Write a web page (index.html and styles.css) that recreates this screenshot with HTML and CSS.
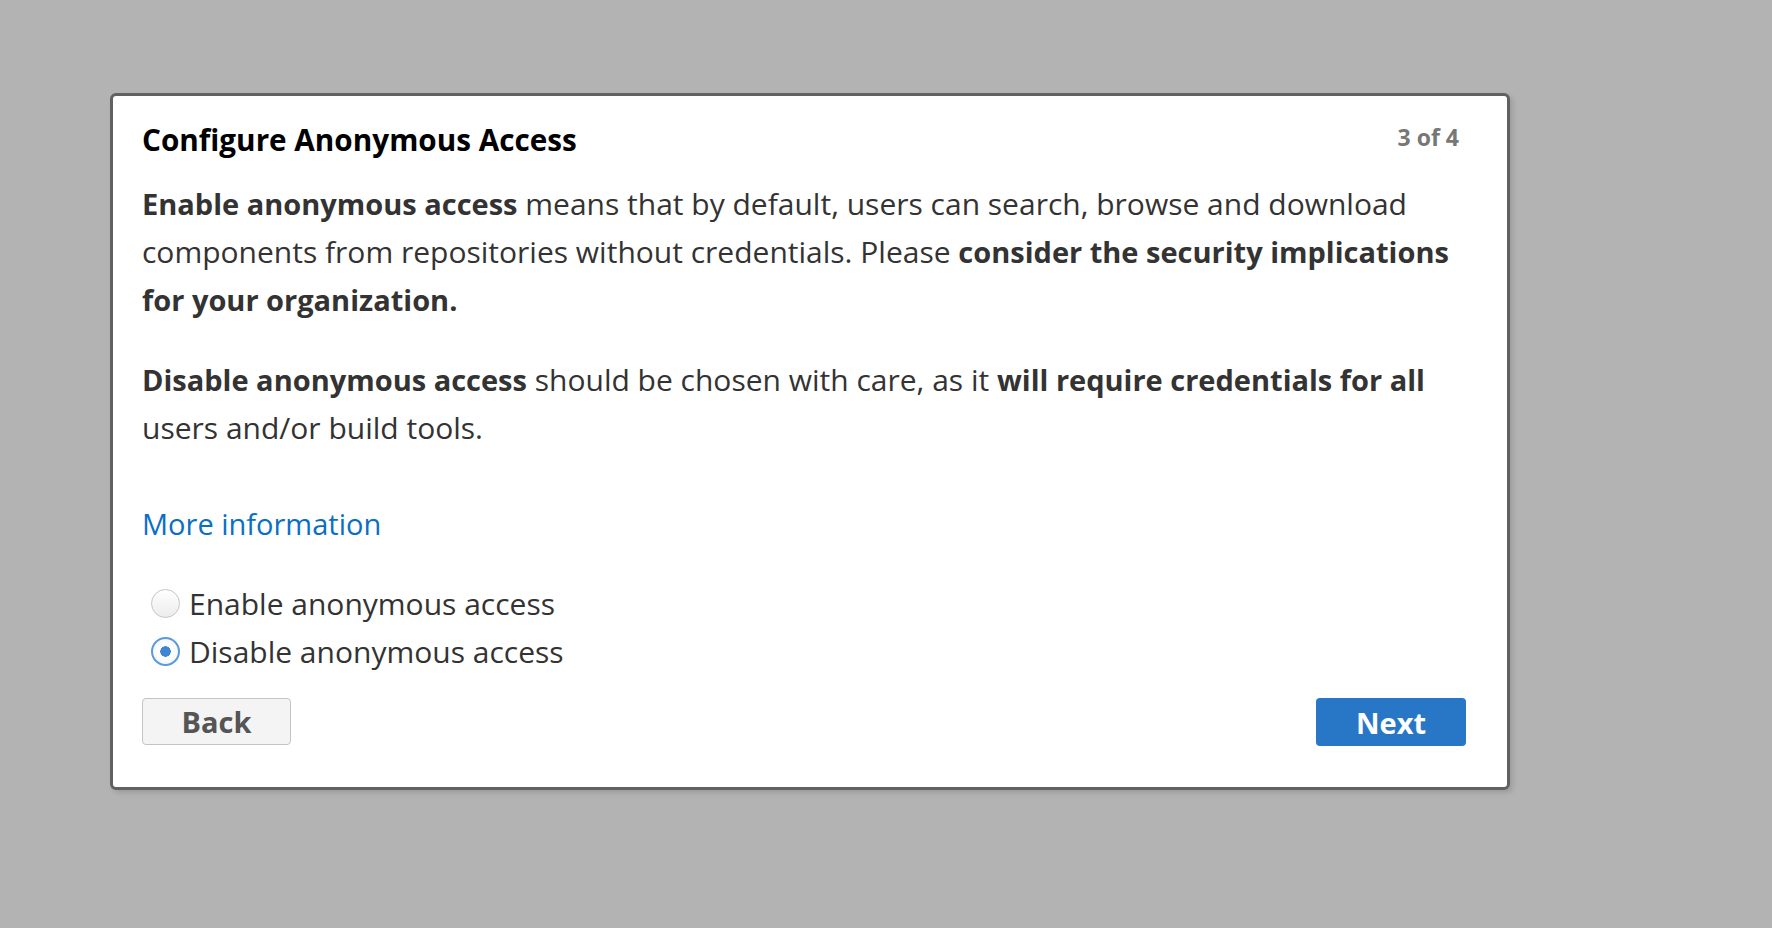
FILE: index.html
```html
<!DOCTYPE html>
<html lang="en">
<head>
<meta charset="utf-8">
<title>Configure Anonymous Access</title>
<link rel="stylesheet" href="styles.css">
</head>
<body>
<div class="dialog">
  <div class="header">
    <h1 class="title">Configure Anonymous Access</h1>
    <span class="step">3 of 4</span>
  </div>
  <p class="para para-first"><strong>Enable anonymous access</strong> means that by default, users can search, browse and download components from repositories without credentials. Please <strong>consider the security implications for your organization.</strong></p>
  <p class="para para-second"><strong>Disable anonymous access</strong> should be chosen with care, as it <strong>will require credentials for all</strong> users and/or build tools.</p>
  <a class="more" href="#">More information</a>
  <div class="options">
    <label class="option"><input type="radio" name="anon" class="radio"><span>Enable anonymous access</span></label>
    <label class="option"><input type="radio" name="anon" class="radio" checked><span>Disable anonymous access</span></label>
  </div>
  <div class="actions">
    <button class="btn btn-back">Back</button>
    <button class="btn btn-next">Next</button>
  </div>
</div>
</body>
</html>
```
FILE: styles.css
```css
html, body {
  margin: 0;
  padding: 0;
}
body {
  background: #b3b3b3;
  font-family: "Open Sans", Lato, sans-serif;
  width: 1772px;
  height: 928px;
  overflow: hidden;
}
.dialog {
  box-sizing: border-box;
  margin: 93px 0 0 110px;
  width: 1400px;
  height: 697px;
  background: #fff;
  border: 3px solid #616161;
  border-radius: 6px;
  box-shadow: 3px 3px 5px rgba(0, 0, 0, 0.12);
  padding: 27px 41px 41px 29px;
  display: flex;
  flex-direction: column;
}
.header {
  display: flex;
  justify-content: space-between;
  align-items: flex-start;
  height: 34px;
}
.title {
  margin: 0;
  font-size: 29.7px;
  line-height: 34px;
  font-weight: 700;
  color: #000;
}
.step {
  font-size: 23px;
  line-height: 28px;
  font-weight: 700;
  color: #777;
  margin-right: 7px;
}
.para {
  margin: 0;
  font-size: 30px;
  line-height: 48px;
  color: #333;
}
.para strong {
  font-weight: 700;
  font-size: 29px;
}
.para-first {
  margin-top: 23px;
}
.para-second {
  margin-top: 32px;
}
.more {
  display: block;
  margin-top: 48px;
  font-size: 29px;
  line-height: 48px;
  color: #0a6fc4;
  text-decoration: none;
  align-self: flex-start;
}
.options {
  margin-top: 31px;
  display: flex;
  flex-direction: column;
}
.option {
  display: flex;
  align-items: center;
  height: 48px;
  font-size: 30px;
  color: #333;
}
.radio {
  appearance: none;
  -webkit-appearance: none;
  box-sizing: border-box;
  width: 29px;
  height: 29px;
  margin: 0 9px 0 9px;
  border-radius: 50%;
  border: 1.5px solid #c6c6c6;
  background: linear-gradient(#ffffff, #ececec);
}
.radio:checked {
  border: 2px solid #5a9be0;
  background: radial-gradient(circle, #3f86d2 0 5px, #ffffff 5.5px, #f1f1f1 100%);
}
.actions {
  margin-top: 23px;
  display: flex;
  justify-content: space-between;
}
.btn {
  box-sizing: border-box;
  height: 48px;
  width: 150px;
  border-radius: 4px;
  font-family: inherit;
  font-size: 29px;
  font-weight: 700;
  cursor: pointer;
}
.btn-back {
  width: 149px;
  height: 47px;
  background: #f4f4f4;
  border: 1.5px solid #c4c4c4;
  color: #555;
}
.btn-next {
  background: #2877c7;
  border: none;
  color: #fff;
}
```
